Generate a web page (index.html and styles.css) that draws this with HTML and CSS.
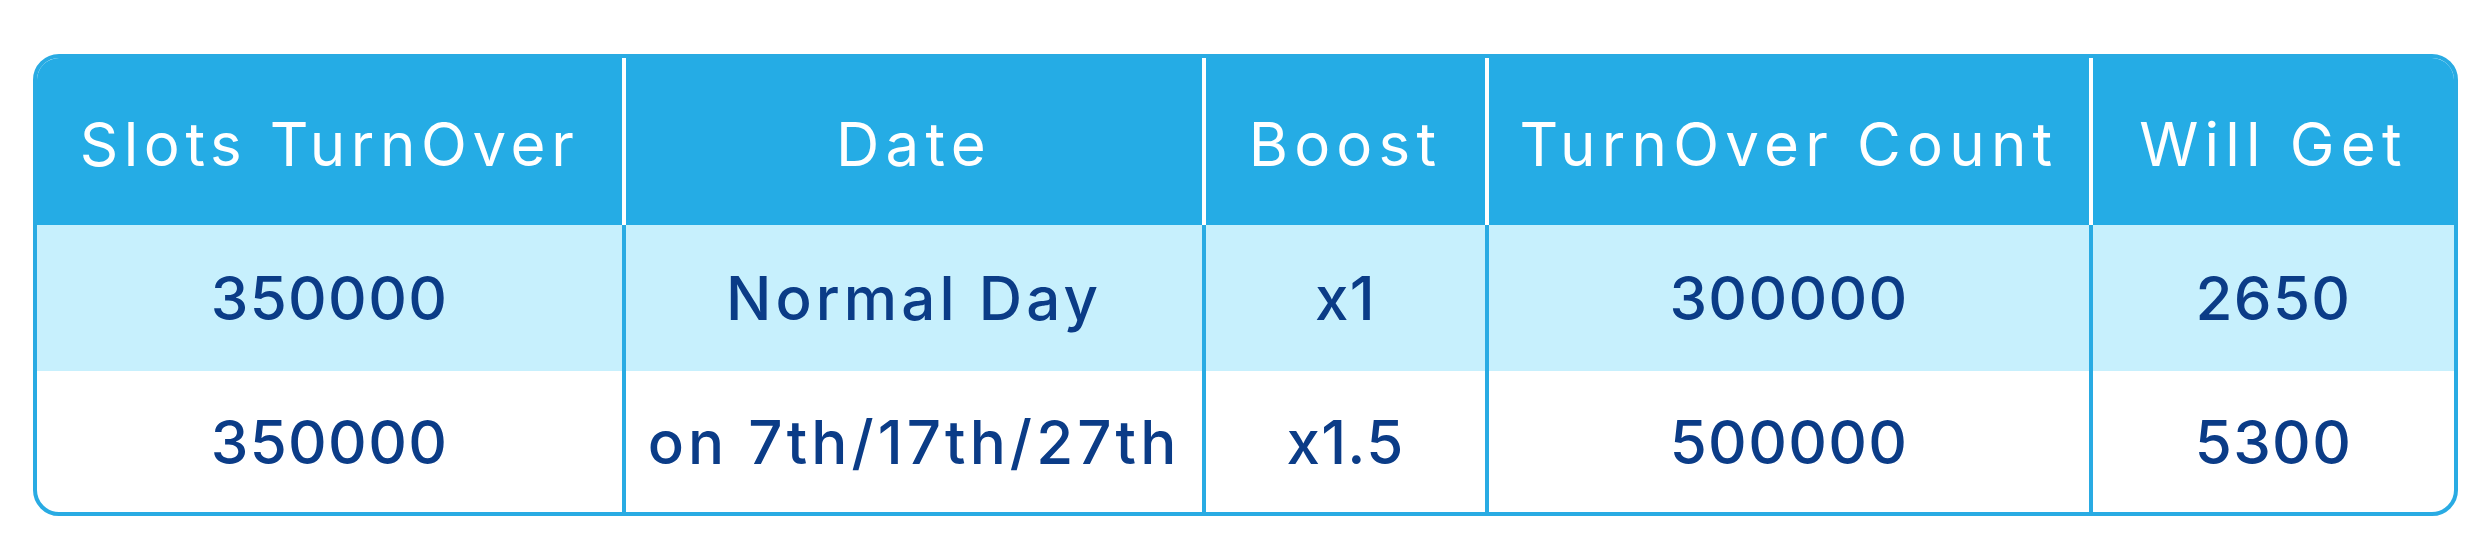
FILE: index.html
```html
<!DOCTYPE html>
<html>
<head>
<meta charset="utf-8">
<link rel="stylesheet" href="styles.css">
</head>
<body>
<div class="wrap">
  <div class="table">
    <div class="cell head">Slots TurnOver</div>
    <div class="cell head">Date</div>
    <div class="cell head">Boost</div>
    <div class="cell head">TurnOver Count</div>
    <div class="cell head">Will Get</div>

    <div class="cell body alt">350000</div>
    <div class="cell body alt txt">Normal Day</div>
    <div class="cell body alt">x1</div>
    <div class="cell body alt">300000</div>
    <div class="cell body alt">2650</div>

    <div class="cell body">350000</div>
    <div class="cell body txt">on 7th/17th/27th</div>
    <div class="cell body">x1.5</div>
    <div class="cell body">500000</div>
    <div class="cell body">5300</div>
  </div>
</div>
</body>
</html>
```

FILE: styles.css
```css
html, body {
  margin: 0;
  background: #ffffff;
}

.wrap {
  padding: 54px 0 0 33px;
}

.table {
  box-sizing: border-box;
  width: 2425px;
  border: 4px solid #29abe3;
  border-radius: 26px;
  overflow: hidden;
  display: grid;
  grid-template-columns: 585px 580px 283px 604px 365px;
  grid-template-rows: 167px 146px 141px;
  font-family: "Inter", "Open Sans", sans-serif;
  font-size: 60px;
  background: #ffffff;
}

.cell {
  display: flex;
  align-items: center;
  justify-content: center;
  white-space: nowrap;
}

.cell:not(:nth-child(5n+1)) {
  border-left: 4px solid #29abe3;
}

.head {
  background: #25ace5;
  color: #ffffff;
  font-weight: 400;
  letter-spacing: 6.2px;
  padding-top: 5px;
}

.head:not(:nth-child(5n+1)) {
  border-left-color: #ffffff;
}

.head:first-child {
  letter-spacing: 5.6px;
}

.body {
  color: #0b3c87;
  font-weight: 500;
  letter-spacing: 1.3px;
}

.body.txt {
  letter-spacing: 4.1px;
}

.alt {
  background: #c7f0fd;
}
```
